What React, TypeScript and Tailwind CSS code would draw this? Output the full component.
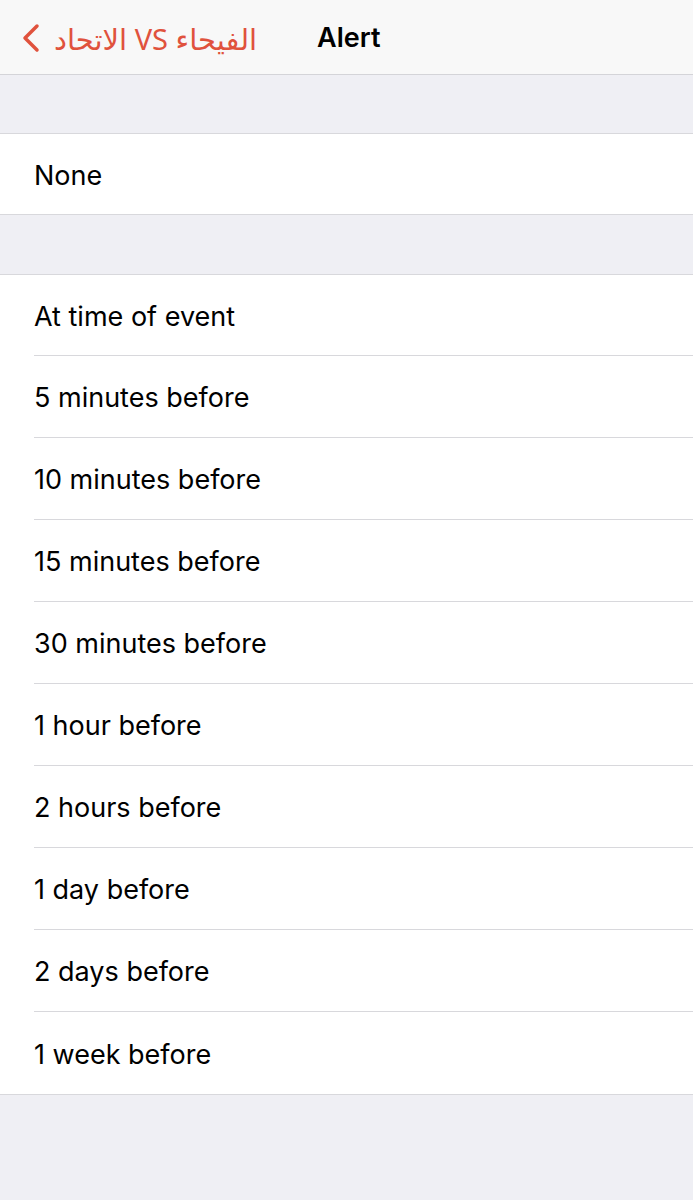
const options = [
  "At time of event",
  "5 minutes before",
  "10 minutes before",
  "15 minutes before",
  "30 minutes before",
  "1 hour before",
  "2 hours before",
  "1 day before",
  "2 days before",
  "1 week before",
];

function Row({ label, last, h }: { label: string; last?: boolean; h: string }) {
  return (
    <div className="pl-[34px] bg-white">
      <div
        className={
          h +
          " flex items-center pt-[4px] text-[27px] text-black " +
          (last ? "" : "border-b border-[#d8d8dc]")
        }
      >
        {label}
      </div>
    </div>
  );
}

export default function App() {
  return (
    <div
      className="min-h-[1200px] bg-[#efeff4]"
      style={{ fontFamily: "Inter, 'Noto Sans', sans-serif" }}
    >
      <nav className="h-[75px] bg-[#f8f8f8] border-b border-[#d4d4d8] flex items-center pt-[2px]">
        <div className="flex items-center pl-[20px] text-[#e0523d]">
          <svg width="22" height="30" viewBox="0 0 22 30" fill="none">
            <path
              d="M17 3 L5 15 L17 27"
              stroke="currentColor"
              strokeWidth="3.5"
              strokeLinecap="round"
              strokeLinejoin="round"
            />
          </svg>
          <span
            dir="rtl"
            className="ml-[12px] text-[29px] leading-none"
            style={{ fontFamily: "'Noto Sans', 'DejaVu Sans', sans-serif" }}
          >
            الفيحاء VS الاتحاد
          </span>
        </div>
        <div className="ml-[60px] text-[27px] font-semibold text-black">Alert</div>
      </nav>

      <div className="h-[58px]" />
      <div className="border-y border-[#d8d8dc] bg-white">
        <Row label="None" last h="h-[80px]" />
      </div>

      <div className="h-[59px]" />
      <div className="border-y border-[#d8d8dc] bg-white">
        {options.map((o, i) => (
          <Row
            key={o}
            label={o}
            last={i === options.length - 1}
            h={i === 0 ? "h-[81px]" : "h-[82px]"}
          />
        ))}
      </div>
    </div>
  );
}
